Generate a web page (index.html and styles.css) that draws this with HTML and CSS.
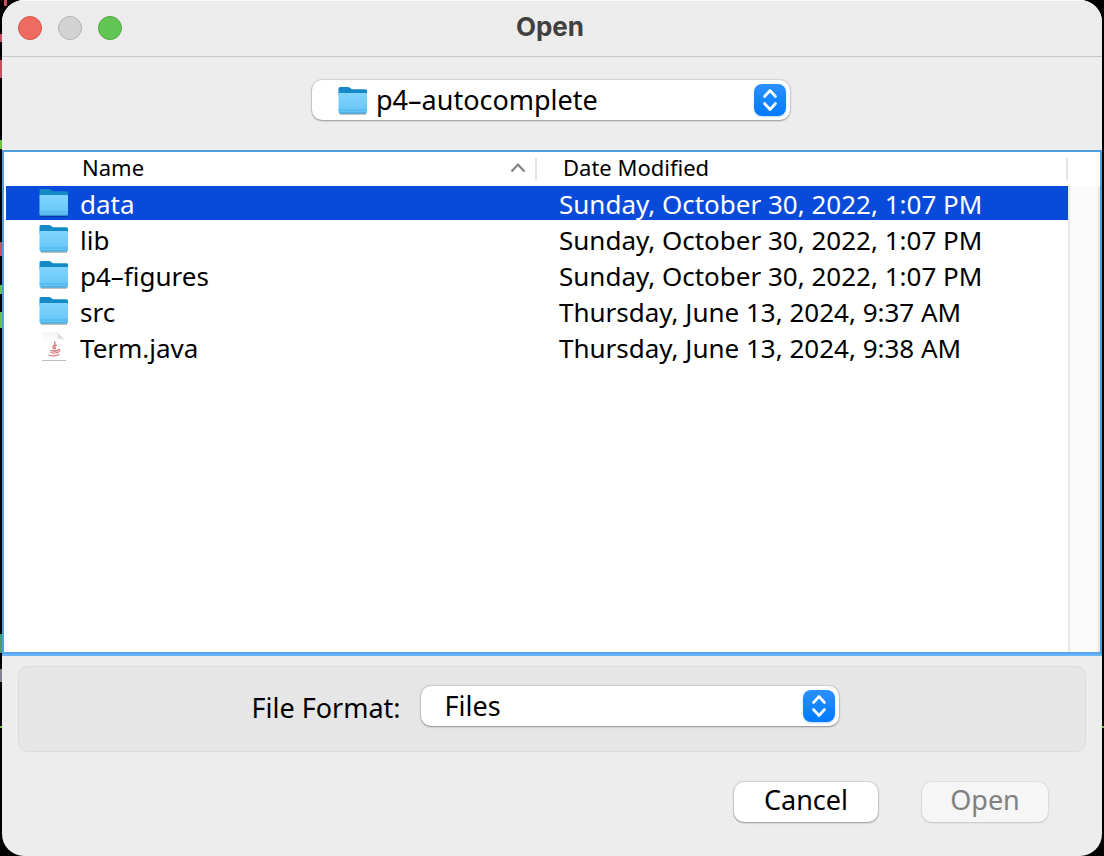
FILE: index.html
```
<!DOCTYPE html>
<html lang="en">
<head>
<meta charset="utf-8">
<title>Open</title>
<link rel="stylesheet" href="styles.css">
</head>
<body>
<svg class="defs" aria-hidden="true">
  <defs>
    <linearGradient id="front" x1="0" y1="0" x2="0" y2="1">
      <stop offset="0" stop-color="#82d5fe"/>
      <stop offset="1" stop-color="#63c3f5"/>
    </linearGradient>
    <linearGradient id="page" x1="0" y1="0" x2="0" y2="1">
      <stop offset="0" stop-color="#f5f5f5"/>
      <stop offset="0.4" stop-color="#ffffff"/>
    </linearGradient>
    <symbol id="folder" viewBox="0 0 30 30">
      <path d="M2 28h26" stroke="#000" stroke-opacity=".25" stroke-width="2"/>
      <path d="M.5 2.500Q.5 1 2 1h8q1 0 2 .8l1.200 1Q14 3.300 15 3.300h12.500q1.500 0 1.500 1.500v5H.5z" fill="#1489c6"/>
      <path d="M.5 8Q.5 7 1.500 7H28q1 0 1 1v18q0 1.500-1.500 1.500H2Q.5 27.500.5 26z" fill="url(#front)"/>
      <path d="M.5 24h28.500" stroke="#4fb2e6" stroke-width="1"/>
      <path d="M1.500 27h26.500" stroke="#3d9fd2" stroke-width="1"/>
    </symbol>
    <symbol id="updown" viewBox="0 0 32 32">
      <path d="M10.500 12.500l5.500-6 5.500 6M10.500 19.500l5.500 6 5.500-6" fill="none" stroke="#fff" stroke-width="2.600" stroke-linecap="round" stroke-linejoin="round"/>
    </symbol>
  </defs>
</svg>
<main class="window">
  <header class="titlebar">
    <div class="lights">
      <button class="light close" aria-label="Close"></button>
      <button class="light minimize" aria-label="Minimize" disabled></button>
      <button class="light zoom" aria-label="Zoom"></button>
    </div>
    <h1 class="title">Open</h1>
  </header>

  <div class="location">
    <div class="popup popup-location">
      <select class="popup-select with-icon" aria-label="Location">
        <option>p4–autocomplete</option>
      </select>
      <svg class="popup-icon" aria-hidden="true"><use href="#folder"/></svg>
      <svg class="popup-arrows" aria-hidden="true"><use href="#updown"/></svg>
    </div>
  </div>

  <section class="browser" aria-label="Files">
    <table class="files">
      <thead>
        <tr>
          <th class="col-name" scope="col"><div class="heading">Name
            <svg class="sort" viewBox="0 0 16 12" aria-hidden="true"><path d="M1.500 9.500l6.500-7 6.500 7" fill="none" stroke="#808080" stroke-width="2.200"/></svg></div></th>
          <th class="col-date" scope="col"><div class="heading">Date Modified</div></th>
        </tr>
      </thead>
      <tbody>
        <tr class="selected">
          <td><div class="file"><svg class="file-icon" aria-hidden="true"><use href="#folder"/></svg>data</div></td>
          <td><div class="date">Sunday, October 30, 2022, 1:07 PM</div></td>
        </tr>
        <tr>
          <td><div class="file"><svg class="file-icon" aria-hidden="true"><use href="#folder"/></svg>lib</div></td>
          <td><div class="date">Sunday, October 30, 2022, 1:07 PM</div></td>
        </tr>
        <tr>
          <td><div class="file"><svg class="file-icon" aria-hidden="true"><use href="#folder"/></svg>p4–figures</div></td>
          <td><div class="date">Sunday, October 30, 2022, 1:07 PM</div></td>
        </tr>
        <tr>
          <td><div class="file"><svg class="file-icon" aria-hidden="true"><use href="#folder"/></svg>src</div></td>
          <td><div class="date">Thursday, June 13, 2024, 9:37 AM</div></td>
        </tr>
        <tr>
          <td><div class="file"><svg class="file-icon" viewBox="0 0 30 30" aria-hidden="true">
            <path d="M3.500 0H18l8 8v20.500H3.500z" fill="url(#page)"/>
            <path d="M18 0q1.500 6 0 7 3-1 8 1z" fill="#dedede"/>
            <path d="M3 28.500h24" stroke="#bdbdbd" stroke-width="1"/>
            <g fill="none" stroke="#d9777c" stroke-width="1.300" stroke-linecap="round">
              <path d="M15.500 10q1.500 2-.5 3.500t0 3.500M17.500 13q-3 1.500-1 3.500"/>
              <path d="M11.500 18.500q3 1 7 0M12 20.500q3 1.200 6 0M10 23q5 2 10-.5M19.500 17.500q2.500.5-.5 3"/>
            </g>
          </svg>Term.java</div></td>
          <td><div class="date">Thursday, June 13, 2024, 9:38 AM</div></td>
        </tr>
      </tbody>
    </table>
    <div class="gutter"></div>
  </section>

  <div class="format">
    <label class="format-label" for="format">File Format:</label>
    <div class="popup popup-format">
      <select class="popup-select" id="format">
        <option>Files</option>
      </select>
      <svg class="popup-arrows" aria-hidden="true"><use href="#updown"/></svg>
    </div>
  </div>

  <footer class="actions">
    <button class="button cancel">Cancel</button>
    <button class="button open" disabled>Open</button>
  </footer>
</main>
</body>
</html>
```
FILE: styles.css
```
* { box-sizing: border-box; }

body {
  margin: 0;
  padding: 0 2px;
  background:
    linear-gradient(#c4505f, #c4505f) 0 60px / 2px 18px no-repeat,
    linear-gradient(#c4505f, #c4505f) 0 34px / 2px 8px no-repeat,
    linear-gradient(#c4505f, #c4505f) 4px 0 / 3px 6px no-repeat,
    linear-gradient(#6cc240, #6cc240) 0 140px / 2px 9px no-repeat,
    linear-gradient(#c4505f, #c4505f) 0 242px / 2px 14px no-repeat,
    linear-gradient(#6cc240, #6cc240) 0 285px / 2px 9px no-repeat,
    linear-gradient(#6cc240, #6cc240) 0 312px / 2px 16px no-repeat,
    linear-gradient(#4b9c6c, #4b9c6c) 0 634px / 2px 19px no-repeat,
    linear-gradient(#7d8190, #7d8190) 0 669px / 2px 13px no-repeat,
    linear-gradient(#6cc240, #6cc240) 0 726px / 100% 2px no-repeat,
    #000;
  color: #000;
  font: 27px/36px "Noto Sans", "Open Sans", sans-serif;
}

.defs {
  position: absolute;
  width: 0;
  height: 0;
}

.window {
  display: flex;
  flex-direction: column;
  min-height: 100vh;
  overflow: hidden;
  border-radius: 22px;
  background: #ededed;
}

.titlebar {
  display: grid;
  grid-template-columns: 1fr auto 1fr;
  align-items: center;
  height: 57px;
  padding: 0 20px 2px 16px;
  border-top: 1px solid #fafafa;
  border-bottom: 1px solid #c8c8c8;
  background: #ececec;
}

.lights {
  display: flex;
  gap: 16px;
}

.light {
  width: 24px;
  height: 24px;
  padding: 0;
  border: 1px solid;
  border-radius: 50%;
}

.close { border-color: #d5564a; background: #ed6b60; }
.minimize { border-color: #b3b3b3; background: #d3d3d3; }
.zoom { border-color: #50a73f; background: #62c655; }

.title {
  margin: 0;
  padding-bottom: 2px;
  color: #404040;
  font: 700 26px/32px Inter, sans-serif;
}

.location {
  display: flex;
  justify-content: center;
  padding: 23px 18px 30px 16px;
}

.popup {
  position: relative;
  height: 40px;
}

.popup-location { width: 478px; }
.popup-format { width: 418px; }

.popup-select {
  width: 100%;
  height: 40px;
  padding: 0 48px 0 24px;
  border: 0;
  border-radius: 10px;
  background: #fff;
  box-shadow: 0 0 1px 1px rgba(0, 0, 0, 0.1), 0 1px 2px rgba(0, 0, 0, 0.3);
  color: #000;
  font: inherit;
  appearance: none;
}

.with-icon { padding-left: 64px; }

.popup-icon {
  position: absolute;
  top: 6px;
  left: 26px;
  width: 30px;
  height: 30px;
  pointer-events: none;
}

.popup-arrows {
  position: absolute;
  top: 4px;
  right: 4px;
  width: 32px;
  height: 32px;
  border-radius: 8px;
  background: linear-gradient(#2b90ff, #007aff);
  box-shadow: 0 1px 2px rgba(0, 122, 255, 0.3);
  pointer-events: none;
}

.browser {
  display: flex;
  flex: 1;
  align-items: flex-start;
  padding-left: 2px;
  border: 2px solid #4f9fe0;
  border-bottom-color: #57a6ec;
  background: #fff;
  box-shadow: 0 2px #6ab6f8;
}

.files {
  flex: 1;
  border-collapse: collapse;
  table-layout: fixed;
  font-size: 26px;
}

.files th,
.files td {
  padding: 0;
  text-align: left;
}

.col-name { width: 50%; }

.heading {
  display: flex;
  align-items: center;
  justify-content: space-between;
  height: 22px;
  margin: 6px 0;
  padding-bottom: 4px;
  border-right: 2px solid #e3e3e3;
  font-size: 22px;
  font-weight: 400;
  line-height: 22px;
}

.col-name .heading { padding-right: 9px; padding-left: 76px; }
.col-date .heading { padding-left: 26px; }

.sort {
  width: 16px;
  height: 12px;
  margin-top: 2px;
}

.file,
.date {
  display: flex;
  align-items: center;
  height: 34px;
  margin-bottom: 2px;
  padding-top: 2px;
  white-space: nowrap;
}

.file {
  gap: 11px;
  padding-left: 33px;
}

.date { padding-left: 22px; }

.file-icon {
  width: 30px;
  height: 30px;
  margin-bottom: 2px;
}

.selected .file,
.selected .date {
  background: #084bdb;
  color: #fff;
}

.gutter {
  align-self: stretch;
  width: 32px;
  margin-top: 34px;
  border: solid #e8e8e8;
  border-width: 0 2px;
  background: #fafafa;
}

.format {
  display: flex;
  align-items: center;
  justify-content: center;
  gap: 20px;
  height: 86px;
  margin: 12px 16px 0;
  padding: 0 14px 6px 0;
  border: 1px solid #dadada;
  border-radius: 10px;
  background: #e6e6e6;
}

.format-label { padding-top: 4px; }

.actions {
  display: flex;
  justify-content: flex-end;
  gap: 44px;
  padding: 30px 54px 34px;
}

.button {
  width: 144px;
  height: 40px;
  padding: 0 0 4px;
  border: 0;
  border-radius: 10px;
  background: #fff;
  box-shadow: 0 0 1px 1px rgba(0, 0, 0, 0.1), 0 1px 2px rgba(0, 0, 0, 0.3);
  color: #000;
  font: inherit;
}

.open {
  width: 126px;
  background: #f6f6f6;
  box-shadow: 0 0 1px 1px rgba(0, 0, 0, 0.05), 0 1px 2px rgba(0, 0, 0, 0.12);
  color: #808080;
}
```
